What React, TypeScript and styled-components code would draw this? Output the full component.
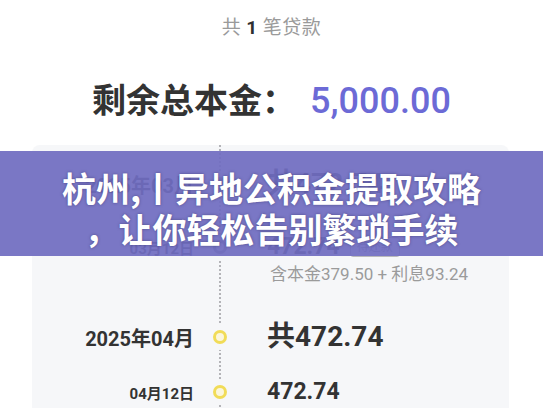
import React from "react";
import styled, { createGlobalStyle } from "styled-components";

const GlobalStyle = createGlobalStyle`
    html, body {
        margin: 0;
        padding: 0;
        background: #ffffff;
        overflow: hidden;
    }
    body {
        font-family: "Roboto", "Noto Sans CJK SC", sans-serif;
        color: #333333;
    }
`;

const Page = styled.div`
    position: relative;
    width: 543px;
    height: 408px;
    overflow: hidden;
    display: flex;
    flex-direction: column;
    align-items: center;
`;

const LoanCount = styled.div`
    margin-top: 18px;
    font-size: 19px;
    line-height: 20px;
    color: #9a9a9a;
    letter-spacing: 0.5px;

    b {
        color: #2f2f2f;
        font-weight: 700;
        margin: 0 5px;
    }
`;

const TotalLine = styled.div`
    margin-top: 43px;
    font-size: 34px;
    line-height: 40px;
    font-weight: 700;
    color: #333333;
    display: flex;
    align-items: baseline;
`;

const TotalAmount = styled.span`
    margin-left: 14px;
    font-size: 36px;
    font-weight: 500;
    color: #6c6ad6;
`;

const Card = styled.div`
    margin-top: 24px;
    align-self: flex-start;
    margin-left: 32px;
    width: 477px;
    padding-top: 15px;
    border-radius: 8px 8px 0 0;
    background:
        linear-gradient(#b4b4b8 55%, transparent 55%) 187px 0 / 2px 4px repeat-y,
        #f6f7f9;
    display: flex;
    flex-direction: column;
`;

const Row = styled.div<{ $height?: number; $top?: number; $bottom?: number }>`
    display: grid;
    grid-template-columns: 162px 52px 1fr;
    grid-auto-rows: auto;
    align-items: center;
    height: ${(p) => (p.$height ? p.$height + "px" : "auto")};
    padding-top: ${(p) => (p.$top || 0) + "px"};
    padding-bottom: ${(p) => (p.$bottom || 0) + "px"};
`;

const DateCell = styled.div<{ $size: number }>`
    text-align: right;
    font-size: ${(p) => p.$size + "px"};
    font-weight: 700;
    color: #333333;
    white-space: nowrap;
`;

const DotCell = styled.div`
    display: flex;
    justify-content: center;
    align-items: center;
`;

const Dot = styled.span<{ $muted?: boolean }>`
    width: 8px;
    height: 8px;
    border-radius: 50%;
    border: 3px solid ${(p) => (p.$muted ? "#8c8c8e" : "#f1dc58")};
    background: ${(p) => (p.$muted ? "#e6e6e8" : "#fbf6dc")};
    box-shadow: 0 0 0 6px #f6f7f9;
`;

const AmountCell = styled.div<{ $size: number }>`
    padding-left: 21px;
    display: flex;
    align-items: center;
    font-size: ${(p) => p.$size + "px"};
    line-height: 30px;
    font-weight: 700;
    color: #333333;
    white-space: nowrap;
`;

const Tag = styled.span`
    margin-left: 10px;
    padding: 1px 6px;
    border: 1px solid #b9b9bb;
    border-radius: 3px;
    font-size: 12px;
    line-height: 16px;
    font-weight: 400;
    color: #8a8a8a;
`;

const Breakdown = styled.div`
    grid-column: 3;
    padding-left: 24px;
    font-size: 17px;
    line-height: 24px;
    color: #9b9b9b;
    white-space: nowrap;
`;

const Banner = styled.div`
    position: absolute;
    left: 0;
    top: 151px;
    width: 543px;
    height: 105px;
    box-sizing: border-box;
    padding-top: 16px;
    background: rgba(112, 109, 193, 0.93);
    color: #ffffff;
    text-align: center;
    font-family: "Noto Sans CJK SC", sans-serif;
    font-size: 34px;
    line-height: 41px;
    font-weight: 700;
    text-shadow: 0 0 3px rgba(40, 36, 90, 0.55);
    white-space: nowrap;
`;

const months = [
    {
        month: "2025年03月",
        total: "共472.74",
        day: "03月12日",
        amount: "472.74",
        status: "待还款",
        principal: "379.50",
        interest: "93.24",
        top: 24,
        muted: true,
    },
    {
        month: "2025年04月",
        total: "共472.74",
        day: "04月12日",
        amount: "472.74",
        status: "",
        principal: "379.50",
        interest: "93.24",
        top: 16,
        muted: false,
    },
];

export default function App() {
    return (
        <>
            <GlobalStyle />
            <Page>
                <LoanCount>
                    共<b>1</b>笔贷款
                </LoanCount>
                <TotalLine>
                    剩余总本金：<TotalAmount>5,000.00</TotalAmount>
                </TotalLine>

                <Card>
                    {months.map((m) => (
                        <React.Fragment key={m.month}>
                            <Row $height={48}>
                                <DateCell $size={20}>{m.month}</DateCell>
                                <DotCell>
                                    <Dot $muted={m.muted} />
                                </DotCell>
                                <AmountCell $size={28}>{m.total}</AmountCell>
                            </Row>
                            <Row $top={m.top} $bottom={27}>
                                <DateCell $size={15}>{m.day}</DateCell>
                                <DotCell>
                                    <Dot $muted={m.muted} />
                                </DotCell>
                                <AmountCell $size={23}>
                                    {m.amount}
                                    {m.status && <Tag>{m.status}</Tag>}
                                </AmountCell>
                                {m.status && (
                                    <Breakdown>
                                        含本金{m.principal} + 利息{m.interest}
                                    </Breakdown>
                                )}
                            </Row>
                        </React.Fragment>
                    ))}
                </Card>

                <Banner>
                    杭州,丨异地公积金提取攻略
                    <br />
                    ，让你轻松告别繁琐手续
                </Banner>
            </Page>
        </>
    );
}
